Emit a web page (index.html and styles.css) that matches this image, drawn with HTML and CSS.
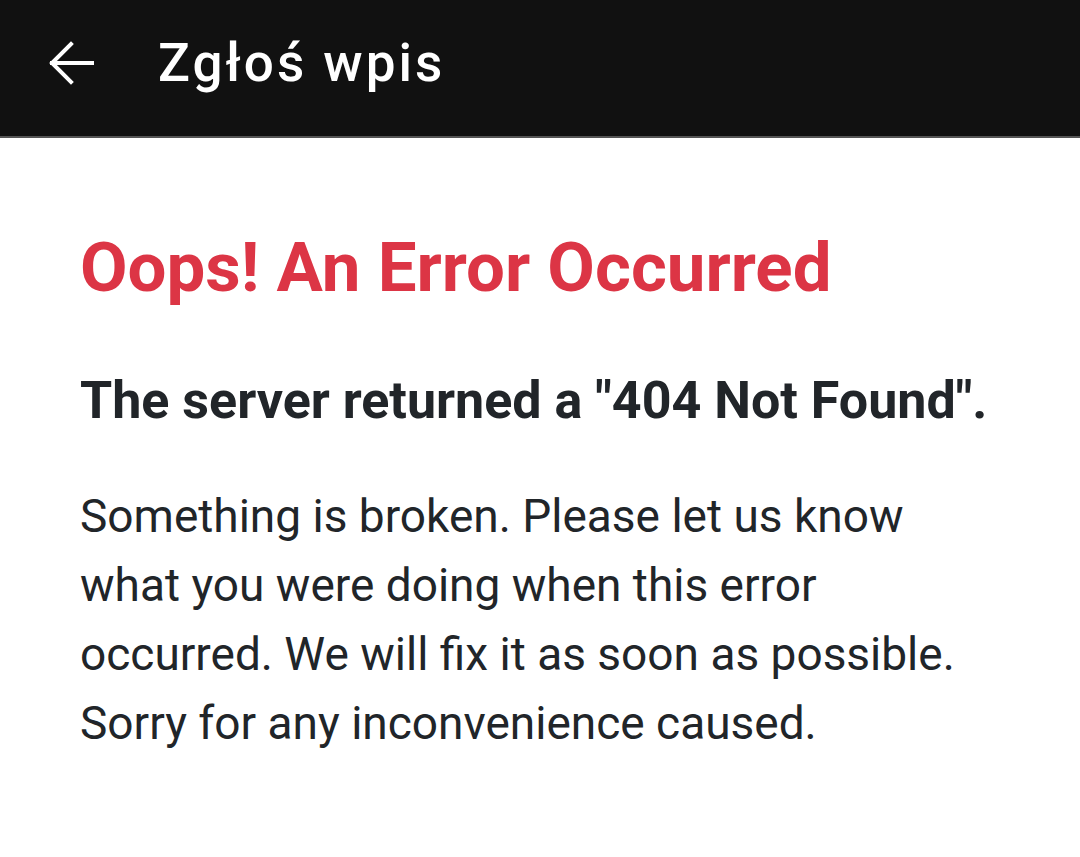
FILE: index.html
```html
<!DOCTYPE html>
<html lang="pl">
<head>
    <meta charset="UTF-8">
    <meta name="viewport" content="width=device-width, initial-scale=1.0">
    <title>Zgłoś wpis</title>
    <link rel="stylesheet" href="styles.css">
</head>
<body>
    <header class="toolbar">
        <button class="back-btn" aria-label="Wstecz">
            <svg width="48" height="48" viewBox="0 0 48 48" fill="none" stroke="#fff" stroke-width="4" stroke-linecap="square">
                <path d="M5 24H45"/>
                <path d="M24 5L5 24L24 43"/>
            </svg>
        </button>
        <h1 class="toolbar-title">Zgłoś wpis</h1>
    </header>

    <main class="content">
        <h2 class="error-title">Oops! An Error Occurred</h2>
        <h3 class="error-status">The server returned a "404 Not Found".</h3>
        <p class="error-text">Something is broken. Please let us know what you were doing when this error occurred. We will fix it as soon as possible. Sorry for any inconvenience caused.</p>
    </main>
</body>
</html>
```

FILE: styles.css
```css
body {
    margin: 0;
    font-family: Roboto, "Liberation Sans", sans-serif;
    background-color: #fff;
    color: #212529;
}
.toolbar {
    display: flex;
    align-items: center;
    height: 136px;
    background-color: #111;
    border-bottom: 2px solid #555;
    padding-left: 47px;
}
.back-btn {
    display: flex;
    padding: 0;
    background: none;
    border: none;
    margin-right: 63px;
    margin-top: -10px;
}
.toolbar-title {
    margin: 0;
    margin-top: -10px;
    color: #fff;
    font-size: 53px;
    font-weight: 500;
    letter-spacing: 3px;
}
.content {
    padding: 0 80px;
}
.error-title {
    margin: 89px 0 0;
    color: #dc3545;
    font-size: 69px;
    font-weight: 700;
    line-height: 1.2;
}
.error-status {
    margin: 60px 0 0;
    font-size: 52px;
    font-weight: 700;
    line-height: 1.2;
}
.error-text {
    margin: 50px 0 0;
    font-size: 46px;
    line-height: 69px;
}
```
